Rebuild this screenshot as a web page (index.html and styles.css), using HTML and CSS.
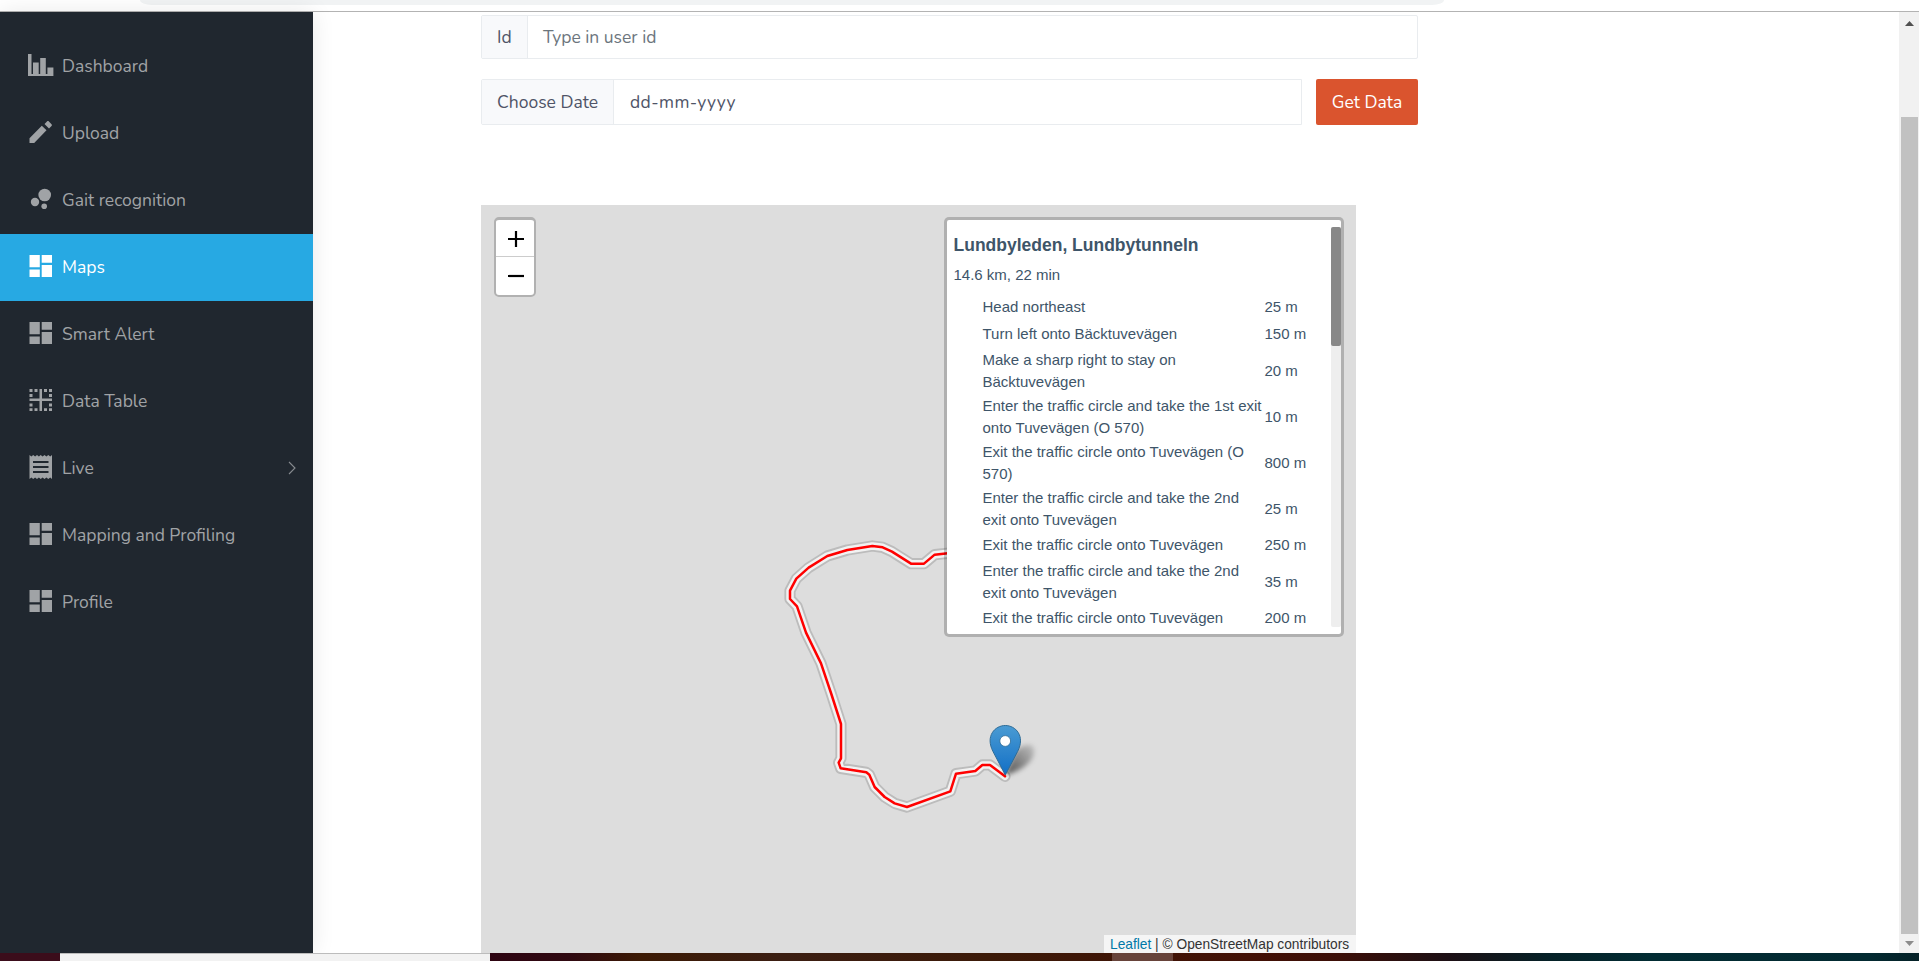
FILE: index.html
```html
<!DOCTYPE html>
<html lang="en">
<head>
<meta charset="utf-8">
<title>Maps</title>
<link rel="stylesheet" href="styles.css">
</head>
<body>
<svg class="defs" width="0" height="0">
  <symbol id="blocks" viewBox="0 0 26 24"><path d="M1.5 1h10.3v12.300H1.500zM13.700 1H24v7.700H13.700zM1.500 15.500h10.300V23H1.500zM13.700 11H24v12H13.700z"/></symbol>
</svg>
<header class="topbar"><div class="omnibox"></div></header>
<div class="app">
  <nav class="sidebar">
    <a class="item"><svg class="icon" viewBox="0 0 26 24"><path d="M0 1h3.500v20H5v-11.500h5.700V21h1.500V5h5.600v16h1.600v-6.500h6V23H0z"/></svg><span>Dashboard</span></a>
    <a class="item"><svg class="icon" viewBox="0 0 26 24"><path d="M1.500 18.300V23h4.700L18.500 10.300l-4.700-4.600zM23.500 5.900c.6-.6.6-1.100 0-1.700l-2.600-2.700c-.6-.6-1.300-.6-1.900 0L16.500 3.900l4.500 4.500z"/></svg><span>Upload</span></a>
    <a class="item"><svg class="icon" viewBox="0 0 26 24"><circle cx="16.700" cy="8" r="6.300"/><circle cx="7" cy="15" r="4.200"/><circle cx="16.200" cy="19.300" r="2.800"/></svg><span>Gait recognition</span></a>
    <a class="item active"><svg class="icon"><use href="#blocks"/></svg><span>Maps</span></a>
    <a class="item"><svg class="icon"><use href="#blocks"/></svg><span>Smart Alert</span></a>
    <a class="item"><svg class="icon" viewBox="0 0 26 24"><path d="M11.500 1h2.500v9.500h10V13H14v10h-2.500V13h-10v-2.500h10z"/><path d="M1.500 1h3v3h-3zM6.500 1h3v3h-3zM16 1h3v3h-3zM21 1h3v3h-3zM1.500 6h3v3h-3zM21 6h3v3h-3zM1.500 15.500h3v3h-3zM21 15.500h3v3h-3zM1.500 20.300h3V23h-3zM6.500 20.300h3V23h-3zM16 20.300h3V23h-3zM21 20.300h3V23h-3z"/></svg><span>Data Table</span></a>
    <a class="item"><svg class="icon" viewBox="0 0 26 24"><path fill-rule="evenodd" d="M1.500 0l1.900 1.500L5.200 0l1.900 1.500L9 0l1.900 1.500L12.700 0l1.900 1.500L16.500 0l1.900 1.500L20.300 0l1.900 1.500L24 0v24l-1.800-1.500L20.300 24l-1.900-1.500-1.900 1.500-1.900-1.500-1.900 1.500-1.800-1.500L9 24l-1.900-1.500L5.200 24l-1.800-1.500L1.500 24zM5 6v2h15.500V6zm0 5v2h15.500v-2zm0 5v2h15.500v-2z"/></svg><span>Live</span><svg class="chevron" viewBox="0 0 8 14"><path d="M1 1l6 6-6 6"/></svg></a>
    <a class="item"><svg class="icon"><use href="#blocks"/></svg><span>Mapping and Profiling</span></a>
    <a class="item"><svg class="icon"><use href="#blocks"/></svg><span>Profile</span></a>
  </nav>
  <main class="content">
    <div class="group id-row"><label class="addon">Id</label><div class="field muted">Type in user id</div></div>
    <div class="date-row">
      <div class="group"><label class="addon date-label">Choose Date</label><div class="field date">dd-mm-yyyy</div></div>
      <button class="get">Get Data</button>
    </div>
    <section class="map">
      <svg class="route" viewBox="3 0 875 748">
        <defs>
          <linearGradient id="pin" x1="0" y1="0" x2="0" y2="1"><stop offset="0" stop-color="#4a9bd3"/><stop offset="1" stop-color="#126fc6"/></linearGradient>
          <linearGradient id="shade" x1="0" y1="1" x2="1" y2="0"><stop offset="0" stop-color="#000" stop-opacity=".65"/><stop offset="1" stop-color="#000" stop-opacity=".12"/></linearGradient>
          <filter id="soft" x="-50%" y="-50%" width="200%" height="200%"><feGaussianBlur stdDeviation="2.500"/></filter>
          <path id="track" d="M735 769L690 735H667L646 753L588 761L571 814L441 861L404 850L374 831L344 801L328 764L319 757L242 745L236 728L243 715V612L214 522L183 430L138 338L111 259L90 237V212L109 176L146 143L202 108L262 90L337 78L368 82L396 95L453 131H492L524 104L590 97"/>
        </defs>
        <g transform="translate(282 315) scale(.33333)" fill="none" stroke-linecap="round" stroke-linejoin="round">
          <use href="#track" stroke="#000" stroke-opacity=".15" stroke-width="33.750"/>
          <use href="#track" stroke="#fff" stroke-opacity=".8" stroke-width="22.500"/>
          <use href="#track" stroke="#f00" stroke-width="7.500"/>
        </g>
        <path d="M527 570L536 549C541 540 554 536 556 544C558 557 541 567 527 570Z" fill="url(#shade)" filter="url(#soft)"/>
        <path d="M527.300 570L515 546.500C507 531 517 520.500 527.300 520.500S547.600 531 539.600 546.500Z" fill="url(#pin)" stroke="#2e6c97" stroke-width="1"/>
        <circle cx="527.200" cy="536" r="5.400" fill="#fff" stroke="#2e6c97" stroke-width=".8"/>
      </svg>
      <div class="zoom">
        <span><svg viewBox="0 0 16 16"><path d="M0 8h16M8 0v16"/></svg></span>
        <span><svg viewBox="0 0 16 16"><path d="M0 8h16"/></svg></span>
      </div>
      <div class="panel">
        <h2>Lundbyleden, Lundbytunneln</h2>
        <h3>14.6 km, 22 min</h3>
        <div class="steps">
          <div class="step"><p>Head northeast</p><b>25 m</b></div>
          <div class="step"><p>Turn left onto Bäcktuvevägen</p><b>150 m</b></div>
          <div class="step two"><p>Make a sharp right to stay on<br>Bäcktuvevägen</p><b>20 m</b></div>
          <div class="step two"><p>Enter the traffic circle and take the 1st exit<br>onto Tuvevägen (O 570)</p><b>10 m</b></div>
          <div class="step two"><p>Exit the traffic circle onto Tuvevägen (O<br>570)</p><b>800 m</b></div>
          <div class="step two"><p>Enter the traffic circle and take the 2nd<br>exit onto Tuvevägen</p><b>25 m</b></div>
          <div class="step"><p>Exit the traffic circle onto Tuvevägen</p><b>250 m</b></div>
          <div class="step two"><p>Enter the traffic circle and take the 2nd<br>exit onto Tuvevägen</p><b>35 m</b></div>
          <div class="step"><p>Exit the traffic circle onto Tuvevägen</p><b>200 m</b></div>
        </div>
        <div class="panel-track"><div class="panel-thumb"></div></div>
      </div>
      <div class="credit"><a>Leaflet</a> | © OpenStreetMap contributors</div>
    </section>
  </main>
  <aside class="scrollbar">
    <svg class="arrow" viewBox="0 0 9 5"><path d="M4.500 0L9 5H0z"/></svg>
    <div class="thumb"></div>
    <svg class="arrow down" viewBox="0 0 9 5"><path d="M0 0h9L4.500 5z"/></svg>
  </aside>
</div>
<footer class="taskbar"><div class="start"></div><div class="search"></div><div class="tasks"><div class="task"></div></div></footer>
</body>
</html>
```
FILE: styles.css
```css
* { box-sizing: border-box; }
body { margin: 0; width: 1919px; height: 961px; overflow: hidden; display: flex; flex-direction: column; background: #fff; font-family: Nunito, Lato, sans-serif; }
.defs { position: absolute; }
.topbar { height: 12px; flex: none; border-bottom: 1px solid #b3b3b3; }
.omnibox { height: 5px; width: 1304px; margin-left: 140px; background: #f1f3f4; border-radius: 0 0 12px 12px / 0 0 5px 5px; }
.app { height: 941px; display: flex; flex: none; }
.sidebar { width: 313px; flex: none; background: #20272f; padding-top: 21px; box-shadow: 0 0 22px rgba(0,0,0,.09); }
.item { height: 67px; display: flex; align-items: center; padding: 0 17px 2px 28px; gap: 8px; color: #a0a3a6; font-size: 17.500px; white-space: nowrap; }
.item.active { background: #27a9e3; color: #fff; }
.icon { width: 26px; height: 24px; fill: currentColor; flex: none; margin-top: -1px; }
.chevron { width: 8px; height: 14px; fill: none; stroke: #878b90; stroke-width: 1.1; margin-left: auto; }
.content { flex: 1; padding: 3px 0 0 168px; }
.group { display: flex; width: 937px; height: 44px; border: 1px solid #e9ecef; border-radius: 2px; font-size: 17.500px; font-weight: 400; }
.addon { background: #f8f9fb; border-right: 1px solid #e9ecef; width: 46px; display: flex; align-items: center; padding-left: 15px; color: #4f5467; white-space: nowrap; }
.date-label { width: 132px; }
.field { display: flex; align-items: center; padding-left: 15px; color: #6c757d; }
.field.date { padding-left: 16px; color: #4f5467; letter-spacing: .4px; }
.date-row { display: flex; gap: 14px; margin-top: 20px; }
.date-row .group { width: 821px; height: 46px; border-radius: 2px 0 0 2px; }
.get { width: 102px; height: 46px; border: 0; border-radius: 2px; background: #da542e; color: #fff; font: 400 17.500px Nunito, Lato, sans-serif; padding: 0; }
.map { position: relative; width: 875px; height: 748px; margin-top: 80px; background: #ddd; font-family: "Liberation Sans", Arial, sans-serif; overflow: hidden; }
.route { display: block; width: 875px; height: 748px; }
.zoom { position: absolute; left: 13px; top: 12px; width: 42px; height: 80px; border: 2px solid #b1b1b1; border-top-width: 3px; border-radius: 5px; background: #fff; }
.zoom span { display: flex; height: 38px; align-items: center; justify-content: center; }
.zoom span:first-child { height: 37px; border-bottom: 1px solid #ccc; padding-top: 2px; }
.zoom svg { width: 16px; height: 16px; stroke: #000; stroke-width: 2.200; margin-left: 2px; }
.panel { position: absolute; left: 463px; top: 12px; width: 400px; height: 420px; border: 3px solid rgba(0,0,0,.2); border-radius: 5px; background: #fff; background-clip: padding-box; color: #3e5569; padding: 14px 0 0 6.500px; }
.panel h2 { margin: 0; font-size: 17.500px; line-height: 22px; }
.panel h3 { margin: 8px 0 0; font-size: 15px; line-height: 22px; font-weight: 400; }
.steps { margin: 7px 0 0 29px; }
.step { display: flex; align-items: center; height: 27px; font-size: 15px; line-height: 22px; white-space: nowrap; }
.step.two { height: 46px; padding-top: 2px; }
.step p { margin: 0; width: 282px; }
.step b { font-weight: 400; }
.panel-track { position: absolute; left: 384px; top: 7px; width: 10px; height: 400px; background: #eee; border-radius: 2px; }
.panel-thumb { height: 119px; background: #888; border-radius: 2px; }
.credit { position: absolute; right: 0; bottom: 0; height: 18px; width: 252px; padding: 1px 0 0 6px; background: #f5f5f5; color: #333; font-size: 13.750px; line-height: 18px; white-space: nowrap; }
.credit a { color: #0078a8; }
.scrollbar { width: 20px; flex: none; background: #f1f1f1; display: flex; flex-direction: column; align-items: center; padding: 9px 0 7px; }
.arrow { width: 9px; height: 5px; fill: #505050; flex: none; }
.arrow.down { fill: #8c8c8c; margin-top: auto; }
.thumb { width: 17px; height: 817px; margin-top: 91px; background: #c1c1c1; }
.taskbar { height: 8px; display: flex; flex: none; }
.start { width: 60px; background: #3b0d1b; }
.search { width: 430px; background: #f2f2f2; border-top: 1px solid #bcbcbc; }
.tasks { flex: 1; background: linear-gradient(90deg, #2d0311, #300911 80px, #3c1a04 150px, #3b1e12 290px, #3c1a08 500px, #421005 760px, #3c0f08 850px, #1c1015 960px, #052127 1060px, #022c33 1160px, #032a31 1380px, #052127); }
.task { width: 61px; height: 8px; margin-left: 622px; background: #67433a; }
```
